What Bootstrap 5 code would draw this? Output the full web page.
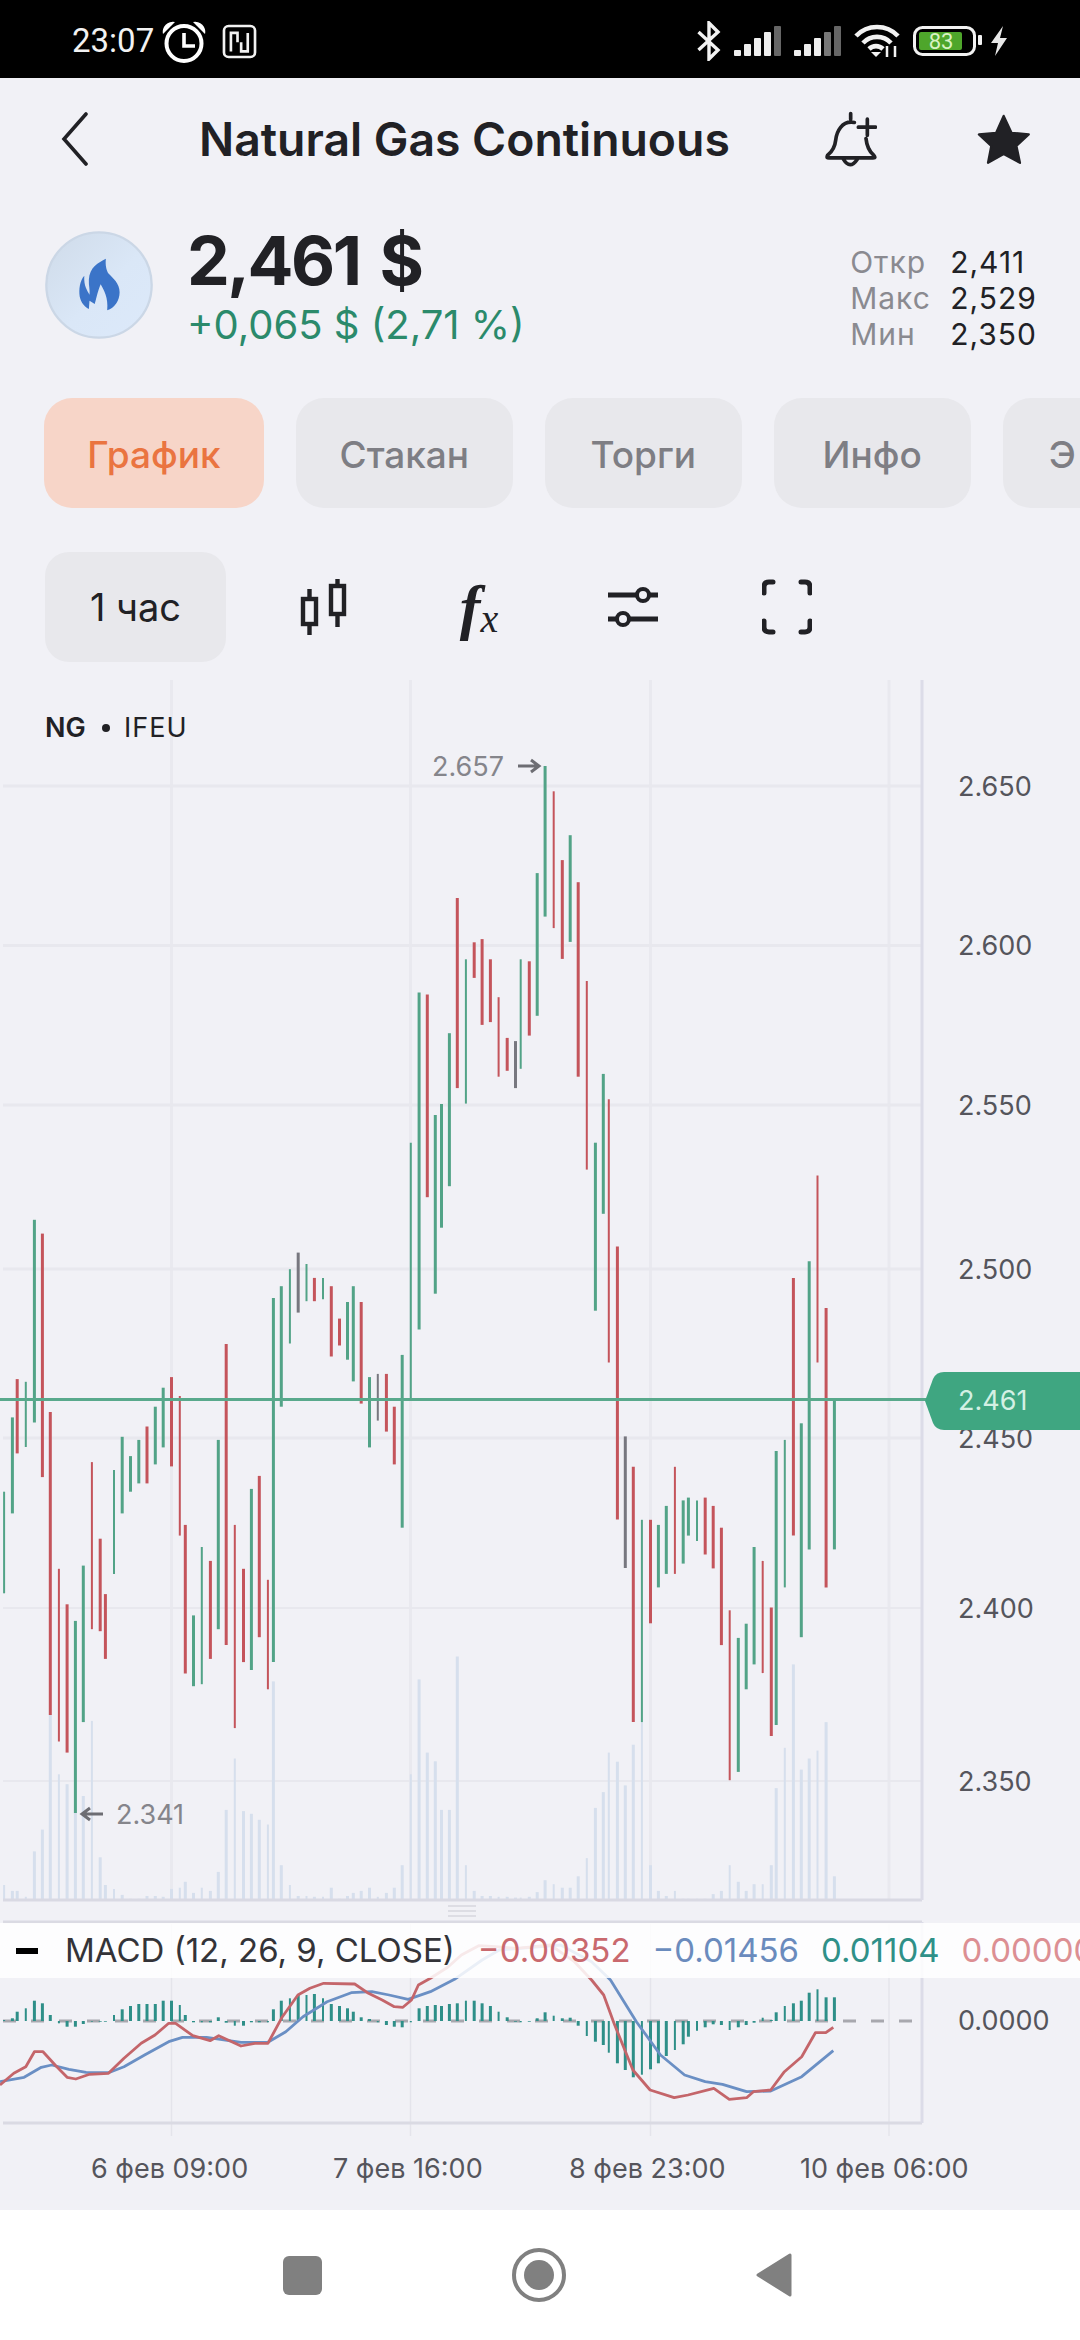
<!DOCTYPE html>
<html lang="ru">
<head>
    <meta charset="UTF-8">
    <meta name="viewport" content="width=device-width, initial-scale=1.0">
    <title>Natural Gas Continuous</title>
    <link href="https://cdn.jsdelivr.net/npm/bootstrap@5.3.0/dist/css/bootstrap.min.css" rel="stylesheet">
    <style>
        html, body { margin: 0; width: 1080px; height: 2340px; overflow: hidden; }
        body { background: #f1f1f6; color: #212125; font-family: "Inter", "Noto Sans", sans-serif; }
        .status-bar { height: 78px; background: #000; color: #f2f2f2; padding: 4px 72px 0; font-family: "Roboto", sans-serif; font-size: 33px; }
        .status-left { gap: 8px; }
        .status-right { gap: 13px; }
        .bolt-icon { margin-left: -6px; }
        .top-bar { height: 122px; padding: 0 48px 0 61px; }
        .page-title { margin: 0 0 0 111px; font-size: 46.3px; font-weight: 600; line-height: 1; color: #212125; white-space: nowrap; }
        .star-icon { margin-left: 98px; }
        .quote-row { height: 198px; padding: 30px 43px 0 45px; }
        .quote-main { margin-left: 34px; }
        .quote-price { font-size: 68px; font-weight: 700; line-height: 68px; margin-top: -4px; letter-spacing: -2.5px; }
        .price-unit { margin-left: 20px; }
        .quote-change { font-size: 40px; line-height: 40px; margin-top: 11px; color: #2b8a6b; }
        .quote-stats { margin-top: 14px; font-size: 30px; line-height: 36px; letter-spacing: 1px; }
        .stat-name { width: 100px; color: #8a8a90; }
        .tab-row { gap: 32px; padding-left: 44px; width: 1200px; }
        .tab-pill { width: 198px; height: 110px; padding: 3px 0 0; border: 0; border-radius: 28px; background: #e8e8ec; color: #7e7e84; font-size: 37px; font-weight: 500; }
        .tab-pill.is-on { width: 221px; background: #f7d5c8; color: #ea7440; }
        .tab-pill.tab-wide { width: 218px; }
        .tab-cut { text-align: left; padding-left: 46px; }
        .tool-row { margin-top: 44px; padding-left: 45px; }
        .period-btn { width: 181px; height: 110px; padding: 0; border: 0; border-radius: 24px; background: #e8e8ec; color: #212125; font-size: 38px; }
        .tool-icons { gap: 104px; margin-left: 74px; }
        .tool-slot { width: 50px; height: 56px; }
        .fx-mark { font-family: "Liberation Serif", serif; font-style: italic; font-weight: 700; color: #212125; font-size: 62px; line-height: 56px; }
        .fx-mark sub { font-size: 40px; font-weight: 400; bottom: -.1em; }
        .chart-box { height: 1530px; margin-top: 18px; }
        .chart-svg { display: block; }
        .chart-svg text { font-family: "Inter", sans-serif; }
        .macd-legend { position: absolute; left: 0; right: 0; top: 1243px; height: 55px; background: rgba(255,255,255,.86); font-size: 33px; white-space: nowrap; padding-left: 16px; overflow: hidden; }
        .macd-dash { width: 22px; height: 6px; background: #000; margin-right: 27px; flex: none; }
        .macd-name { color: #333338; margin-right: 23px; flex: none; }
        .macd-val { margin-right: 22px; flex: none; }
        .val-red { color: #c9696e; }
        .val-blue { color: #6a8bbd; }
        .val-teal { color: #2f9088; }
        .val-pink { color: #dc8f93; }
        .nav-strip { height: 130px; background: #fff; gap: 190px; padding-right: 4px; }
    </style>
</head>
<body>
    <!-- status bar -->
    <div class="status-bar d-flex align-items-center justify-content-between">
        <div class="status-left d-flex align-items-center">
            <span>23:07</span>
            <svg width="44" height="43" viewBox="0 0 44 43"><circle cx="22" cy="23.5" r="17.5" fill="none" stroke="#fff" stroke-width="4"/><path d="M22 13V26H33" fill="none" stroke="#fff" stroke-width="3.6"/><path d="M1 14A10 10 0 0 1 13 2ZM43 14A10 10 0 0 0 31 2Z" fill="#fff"/></svg>
            <svg class="ms-2" width="35" height="35" viewBox="490 45 106 106"><rect x="496" y="51" width="94" height="94" rx="14" fill="none" stroke="#f2f2f2" stroke-width="8"/><path d="M517 128V72H537V100M568 72V128H548V100" fill="none" stroke="#f2f2f2" stroke-width="8"/></svg>
        </div>
        <div class="status-right d-flex align-items-center">
            <svg width="24" height="40" viewBox="0 0 24 40"><path d="M1.5 11L21 29 12 38V2L21 11 1.5 29" fill="none" stroke="#f2f2f2" stroke-width="3.4"/></svg>
            <svg width="47" height="30" viewBox="0 0 47 30"><rect x="0" y="24" width="7" height="6" rx="1" fill="#eee"/><rect x="10" y="18" width="7" height="12" rx="1" fill="#eee"/><rect x="20" y="12" width="7" height="18" rx="1" fill="#eee"/><rect x="30" y="6" width="7" height="24" rx="1" fill="#eee"/><rect x="40" y="0" width="7" height="30" rx="1" fill="#666"/></svg>
            <svg width="47" height="30" viewBox="0 0 47 30"><rect x="0" y="24" width="7" height="6" rx="1" fill="#eee"/><rect x="10" y="18" width="7" height="12" rx="1" fill="#eee"/><rect x="20" y="12" width="7" height="18" rx="1" fill="#eee"/><rect x="30" y="6" width="7" height="24" rx="1" fill="#777"/><rect x="40" y="0" width="7" height="30" rx="1" fill="#666"/></svg>
            <svg width="46" height="34" viewBox="0 0 46 34"><path d="M2 12A29 29 0 0 1 44 12M9 19A19 19 0 0 1 37 19M15 25A10 10 0 0 1 29 25" fill="none" stroke="#f2f2f2" stroke-width="4.6"/><path d="M17 28H27L22 33Z" fill="#f2f2f2"/><path d="M33 22V33M41 22V33" stroke="#f2f2f2" stroke-width="2.5"/></svg>
            <svg width="70" height="30" viewBox="0 0 70 30"><rect x="1.5" y="1.5" width="60" height="27" rx="8" fill="none" stroke="#f2f2f2" stroke-width="3"/><rect x="6" y="6" width="43" height="18" rx="2" fill="#4ea62b"/><text x="28" y="22.5" text-anchor="middle" font-family="Roboto, sans-serif" font-size="22" fill="#d9f3c2">83</text><rect x="65" y="9" width="4" height="10" rx="1" fill="#f2f2f2"/></svg>
            <svg class="bolt-icon" width="18" height="30" viewBox="0 0 18 30"><path d="M13 0L1 17H8L5 30 17 12H10Z" fill="#e8e8e8"/></svg>
        </div>
    </div>

    <!-- title -->
    <div class="top-bar d-flex align-items-center">
        <svg width="27" height="54" viewBox="0 0 27 54"><path d="M25 2L3 27 25 52" fill="none" stroke="#212125" stroke-width="3.6" stroke-linecap="round"/></svg>
        <h1 class="page-title">Natural Gas Continuous</h1>
        <svg class="ms-auto" width="52" height="57" viewBox="40 28 156 170"><path d="M128 62C90 55 75 90 72 115 70 135 60 150 48 160 44 168 47 168 52 168H184C192 168 190 166 186 160 172 148 165 130 163 110M117 35V52M95 172Q115 205 137 172M140 76H192M167 52V100" fill="none" stroke="#212125" stroke-width="11" stroke-linecap="round" stroke-linejoin="round"/></svg>
        <svg class="star-icon" width="57" height="55" viewBox="490 28 175 165"><path d="M578 38L602 90 655 95 617 130 628 182 578 155 530 182 540 130 502 95 555 90Z" fill="#212125" stroke="#212125" stroke-width="7" stroke-linejoin="round"/></svg>
    </div>

    <!-- quote -->
    <div class="quote-row d-flex align-items-start">
        <svg width="108" height="110" viewBox="42 45 330 330">
            <defs><linearGradient id="coin" x1="0" y1="0" x2="1" y2="1"><stop offset="0" stop-color="#cfdbe9"/><stop offset=".55" stop-color="#dae7f7"/><stop offset="1" stop-color="#dce9fa"/></linearGradient></defs>
            <circle cx="207" cy="210" r="161" fill="url(#coin)" stroke="#cbd7e6" stroke-width="7"/>
            <path d="M228 130C205 142 178 155 176 195 175 212 180 225 178 240 172 228 160 215 162 182 148 198 145 225 148 245 152 265 165 278 176 283L178 258 194 268C200 245 205 225 212 208 222 225 236 250 232 287 255 280 270 258 270 232 270 205 250 190 236 175 229 165 226 148 228 130Z" fill="#3b74c8"/>
        </svg>
        <div class="quote-main">
            <div class="quote-price">2,461<span class="price-unit">$</span></div>
            <div class="quote-change">+0,065 $ (2,71 %)</div>
        </div>
        <div class="quote-stats ms-auto">
            <div class="d-flex"><span class="stat-name">Откр</span><span>2,411</span></div>
            <div class="d-flex"><span class="stat-name">Макс</span><span>2,529</span></div>
            <div class="d-flex"><span class="stat-name">Мин</span><span>2,350</span></div>
        </div>
    </div>

    <!-- tabs -->
    <div class="tab-row d-flex">
        <button class="tab-pill is-on" type="button">График</button>
        <button class="tab-pill tab-wide" type="button">Стакан</button>
        <button class="tab-pill" type="button">Торги</button>
        <button class="tab-pill" type="button">Инфо</button>
        <button class="tab-pill tab-cut" type="button">Э</button>
    </div>

    <!-- chart tools -->
    <div class="tool-row d-flex align-items-center">
        <button class="period-btn" type="button">1 час</button>
        <div class="tool-icons d-flex align-items-center">
            <svg class="tool-slot" viewBox="0 0 50 56"><g fill="none" stroke="#212125" stroke-width="4.4"><rect x="3" y="20" width="13" height="25"/><rect x="31" y="7" width="13" height="28"/></g><path d="M9.5 10V20M9.5 45V56M37.5 0V7M37.5 35V48" stroke="#212125" stroke-width="4.4"/></svg>
            <div class="tool-slot fx-mark text-center">f<sub>x</sub></div>
            <svg class="tool-slot" viewBox="0 0 50 56"><path d="M0 16H29M41 16H50M0 40H9M21 40H50" stroke="#212125" stroke-width="5"/><circle cx="35" cy="16" r="6" fill="none" stroke="#212125" stroke-width="4"/><circle cx="15" cy="40" r="6" fill="none" stroke="#212125" stroke-width="4"/></svg>
            <svg class="tool-slot" viewBox="0 0 50 56"><path d="M2 14V8Q2 3 7 3H11M39 3H43Q48 3 48 8V14M2 42V48Q2 53 7 53H11M39 53H43Q48 53 48 48V42" fill="none" stroke="#212125" stroke-width="5" stroke-linecap="round"/></svg>
        </div>
    </div>

    <!-- chart -->
    <div class="chart-box position-relative">
        <svg id="chart" class="chart-svg" width="1080" height="1530" viewBox="0 680 1080 1530"></svg>
        <div class="macd-legend d-flex align-items-center">
            <span class="macd-dash"></span>
            <span class="macd-name">MACD (12, 26, 9, CLOSE)</span>
            <span class="macd-val val-red">−0.00352</span>
            <span class="macd-val val-blue">−0.01456</span>
            <span class="macd-val val-teal">0.01104</span>
            <span class="macd-val val-pink">0.00000</span>
        </div>
    </div>

    <!-- android nav -->
    <div class="nav-strip d-flex align-items-center justify-content-center">
        <svg width="39" height="39" viewBox="0 0 39 39"><rect width="39" height="39" rx="6" fill="#808080"/></svg>
        <svg width="54" height="54" viewBox="0 0 54 54"><circle cx="27" cy="27" r="25" fill="none" stroke="#808080" stroke-width="4"/><circle cx="27" cy="27" r="15" fill="#808080"/></svg>
        <svg width="37" height="44" viewBox="0 0 37 44"><path d="M34 2V42L2 22Z" fill="#808080" stroke="#808080" stroke-width="3" stroke-linejoin="round"/></svg>
    </div>

    <script>
        // crop coordinates read off the zoomed reference: x in crop px, y relative to the y=1300 crop
        const sx = x => +(x / 2.904).toFixed(1);
        const sy = y => +(1300 + y / 2.53).toFixed(1);
        const my = z => +(1880 + z / 3).toFixed(1);

        // x, top, bottom, colour, thin wick, volume top, macd hist
        const candles = [
            [12,485,742,'g',1,1480,420],[36,297,540,'g',0,1495,415],[50,200,388,'r',0,1495,395],[75,207,372,'g',1,1510,385],
            [100,-203,310,'g',0,1395,362],[123,-168,448,'r',0,1340,370],[146,283,1050,'r',0,1050,405],[171,680,1117,'r',1,1200,430],
            [195,770,1145,'r',0,1225,440],[219,812,1298,'g',0,1290,440],[242,672,1068,'g',0,1255,432],[267,410,833,'r',1,1065,425],
            [291,604,838,'r',0,1410,425],[306,744,908,'r',0,1480,425],[331,430,693,'g',1,1490,405],[355,346,540,'g',0,1505,388],
            [379,395,485,'g',0,1515,378],[403,354,464,'g',0,1515,372],[427,320,464,'r',0,1508,372],[451,270,416,'g',0,1508,372],
            [474,222,373,'g',0,1510,362],[498,195,421,'r',0,1490,362],[522,243,596,'r',1,1487,375],[538,569,945,'r',0,1472,405],
            [562,798,977,'g',0,1500,427],[586,625,972,'g',1,1487,427],[611,660,908,'r',0,1495,427],[634,354,833,'g',0,1447,412],
            [657,111,873,'r',0,1290,428],[682,569,1083,'r',1,1160,437],[707,680,916,'r',0,1293,437],[730,478,936,'g',0,1300,427],
            [753,445,853,'r',0,1315,427],[778,708,985,'r',1,1327,427],[794,-5,916,'g',0,965,388],[817,-35,270,'g',0,1430,362],
            [842,-78,110,'g',1,1480,355],[866,-120,32,'x',0,1508,345],[890,-91,3,'g',1,1508,345],[913,-56,3,'r',0,1510,342],
            [938,-56,-2,'g',1,1510,355],[962,-35,143,'r',0,1487,372],[986,47,115,'r',0,1515,378],[1009,5,151,'g',0,1508,385],
            [1026,-35,206,'g',0,1500,395],[1049,5,262,'r',0,1495,412],[1073,195,373,'g',0,1487,417],[1097,187,305,'x',1,1510,427],
            [1122,187,333,'r',0,1500,435],[1145,270,416,'r',0,1487,440],[1168,139,576,'g',0,1430,442],[1193,-398,250,'g',1,1200,427],
            [1217,-778,75,'g',0,960,385],[1241,-773,-260,'r',0,1145,378],[1264,-468,-16,'g',0,1167,375],[1282,-496,-183,'g',0,1290,378],
            [1305,-675,-288,'g',0,1290,372],[1328,-1017,-536,'r',0,902,370],[1353,-862,-497,'g',1,1430,362],[1377,-905,-815,'r',0,1495,362],
            [1400,-913,-696,'r',0,1508,370],[1424,-862,-703,'r',0,1508,378],[1448,-766,-565,'r',1,1510,395],[1473,-663,-580,'r',0,1510,412],
            [1497,-655,-536,'x',0,1512,425],[1512,-862,-585,'g',1,1512,427],[1537,-857,-669,'r',0,1510,425],[1560,-1080,-719,'g',0,1498,415],
            [1583,-1351,-970,'g',0,1468,397],[1608,-1287,-941,'r',1,1478,407],[1633,-1113,-863,'r',0,1487,415],[1656,-1176,-906,'g',0,1487,413],
            [1679,-1057,-565,'r',0,1458,437],[1704,-807,-330,'r',1,1412,468],[1729,-398,27,'g',0,1285,485],[1752,-572,-218,'g',0,1245,495],
            [1768,-508,158,'r',1,1145,518],[1793,-135,555,'r',0,1168,550],[1816,345,678,'x',0,1228,570],[1839,422,1068,'r',0,1125,592],
            [1864,556,1068,'g',1,1068,584],[1889,556,818,'r',0,1430,568],[1912,569,727,'g',0,1495,550],[1935,521,693,'g',0,1508,528],
            [1960,422,693,'r',1,1495,510],[1984,507,667,'g',0,1515,493],[1999,500,596,'g',0,1515,470],[2024,507,610,'g',1,1515,452],
            [2048,500,644,'r',0,1515,442],[2071,521,679,'r',0,1503,433],[2095,576,873,'r',0,1495,435],[2119,785,1215,'r',1,1430,450],
            [2144,855,1194,'g',0,1472,442],[2167,819,985,'g',0,1495,435],[2190,625,922,'g',0,1478,428],[2215,660,944,'r',1,1478,413],
            [2240,778,1103,'r',0,1430,420],[2254,382,1075,'g',0,1235,397],[2279,354,727,'g',1,1133,378],[2304,-56,596,'r',0,922,370],
            [2327,312,853,'g',0,1188,362],[2350,-98,631,'g',0,1160,338],[2374,-315,158,'r',1,1140,328],[2399,20,727,'r',0,1068,352],
            [2423,255,631,'g',0,1458,352]
        ];
        const colours = { g: '#52a387', r: '#c4545b', x: '#77777f' };

        const macdRed = [[0,615],[40,580],[75,560],[100,515],[125,515],[160,555],[195,592],[220,597],[260,583],[315,580],[360,535],[410,490],[450,465],[490,430],[510,430],[560,467],[610,482],[635,467],[700,498],[740,490],[778,490],[820,410],[865,345],[900,325],[940,310],[1030,312],[1070,340],[1110,360],[1145,380],[1170,382],[1195,360],[1215,315],[1250,295],[1300,262],[1340,225],[1390,197],[1440,200],[1500,205],[1598,195],[1668,245],[1718,300],[1753,345],[1783,430],[1838,570],[1888,630],[1958,653],[1998,645],[2073,625],[2118,658],[2168,653],[2188,635],[2238,630],[2278,575],[2328,530],[2368,458],[2398,458],[2420,442]];
        const macdBlue = [[0,605],[70,592],[120,562],[150,555],[200,568],[250,577],[315,578],[360,560],[420,525],[490,485],[530,472],[600,472],[700,487],[778,487],[830,455],[880,410],[950,365],[1020,338],[1080,335],[1130,345],[1185,358],[1250,335],[1320,298],[1400,240],[1450,210],[1628,195],[1718,245],[1773,300],[1848,425],[1918,525],[1988,585],[2048,605],[2098,613],[2168,635],[2238,633],[2328,590],[2420,512]];

        function buildChart() {
            const parts = [];
            const line = (x1, y1, x2, y2, c, w) => parts.push(`<line x1="${x1}" y1="${y1}" x2="${x2}" y2="${y2}" stroke="${c}" stroke-width="${w}"/>`);
            const label = (x, y, t, c, extra = '') => parts.push(`<text x="${x}" y="${y}" fill="${c}" font-size="27" dominant-baseline="central" ${extra}>${t}</text>`);

            // grid
            [171.5, 410.5, 650.5, 889].forEach(x => {
                line(x, 680, x, 1900, '#e9e9ef', 3);
                line(x, 1924, x, 2136, '#e4e4eb', 1.5);
            });
            [[786, '2.650'], [945.6, '2.600'], [1105, '2.550'], [1269, '2.500'], [1438, '2.450'], [1608, '2.400'], [1781, '2.350']].forEach(g => {
                line(3, g[0], 922, g[0], '#e8e8ee', g[0] < 1500 ? 3 : 2);
                label(958, g[0], g[1], '#55555c');
            });

            // symbol caption
            label(45, 727, 'NG', '#212125', 'font-weight="600"');
            parts.push('<circle cx="106" cy="728" r="4" fill="#212125"/>');
            label(124, 727, 'IFEU', '#212125', 'letter-spacing="1"');

            // volume
            candles.forEach(c => line(sx(c[0]), sy(c[5]), sx(c[0]), 1900, '#d6dfed', c[4] ? 2 : 3));
            line(3, 1900, 922, 1900, '#d9d9e3', 3);
            line(922, 680, 922, 1900, '#dcdce8', 3);

            // candles
            candles.forEach(c => line(sx(c[0]), sy(c[1]), sx(c[0]), sy(c[2]), colours[c[3]], c[4] ? 2 : 3));

            // last price line and tag
            line(0, 1399.6, 926, 1399.6, '#59a98c', 3);
            parts.push('<path d="M925 1401L933 1379Q936 1372 944 1372H1080V1430H944Q936 1430 933 1423Z" fill="#3fa681"/>');
            label(958, 1400, '2.461', '#d3f0e4');

            // extremes
            label(432, 766, '2.657', '#85858b');
            parts.push('<path d="M518 766H538M531 760L539 766 531 772" fill="none" stroke="#6d6d73" stroke-width="3"/>');
            label(116, 1814, '2.341', '#85858b');
            parts.push('<path d="M103 1814H83M90 1808L82 1814 90 1820" fill="none" stroke="#6d6d73" stroke-width="3"/>');

            // pane handle
            [1906, 1911, 1916].forEach(y => line(448, y, 476, y, '#d6d6de', 1.5));

            // macd pane
            line(3, 1922, 922, 1922, '#dadae3', 3);
            line(3, 2123, 922, 2123, '#dadae3', 3);
            line(922, 1922, 922, 2123, '#dcdce8', 3);
            parts.push('<line x1="3" y1="2021" x2="922" y2="2021" stroke="#a8a8ae" stroke-width="3" stroke-dasharray="13 15"/>');
            candles.forEach(c => line(sx(c[0]), my(423), sx(c[0]), my(c[6]), '#2e8f88', c[4] ? 2 : 3));
            const poly = (pts, c) => parts.push(`<polyline points="${pts.map(p => sx(p[0]) + ',' + my(p[1])).join(' ')}" fill="none" stroke="${c}" stroke-width="2.8" stroke-linejoin="round"/>`);
            poly(macdBlue, '#6a8fc4');
            poly(macdRed, '#c4656a');
            label(958, 2020, '0.0000', '#55555c');

            // time axis
            [[91, '6 фев 09:00'], [333, '7 фев 16:00'], [569, '8 фев 23:00'], [800, '10 фев 06:00']].forEach(d => label(d[0], 2168, d[1], '#55555c'));

            document.getElementById('chart').innerHTML = parts.join('');
        }

        buildChart();
    </script>
    <script src="https://cdn.jsdelivr.net/npm/bootstrap@5.3.0/dist/js/bootstrap.bundle.min.js"></script>
</body>
</html>
